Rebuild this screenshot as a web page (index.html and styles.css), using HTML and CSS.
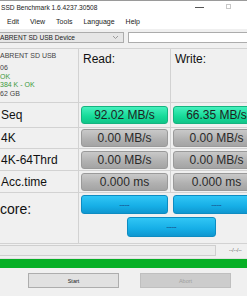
FILE: index.html
```html
<!DOCTYPE html>
<html lang="en">
<head>
    <meta charset="UTF-8">
    <title>AS SSD Benchmark</title>
    <link rel="stylesheet" href="styles.css">
</head>
<body>
    <div class="window">
        <div class="titlebar">
            <span class="title">SSD Benchmark 1.6.4237.30508</span>
            <span class="win_min"></span>
            <span class="win_max"></span>
        </div>

        <ul class="menu">
            <li>Edit</li>
            <li>View</li>
            <li>Tools</li>
            <li>Language</li>
            <li>Help</li>
        </ul>

        <div class="toolbar">
            <div class="combo">
                <span>ABRENT SD USB Device</span>
                <svg width="7" height="5" viewBox="0 0 7 5"><path d="M1 1 L3.5 3.5 L6 1" fill="none" stroke="#9a9a9a" stroke-width="1"/></svg>
            </div>
            <div class="path_box"></div>
        </div>

        <div class="bench">
            <div class="cell info">
                <p>ABRENT SD USB</p>
                <p>06</p>
                <p class="ok">OK</p>
                <p class="ok">384 K - OK</p>
                <p>62 GB</p>
            </div>
            <div class="cell head">Read:</div>
            <div class="cell head">Write:</div>

            <div class="cell label">Seq</div>
            <div class="cell"><div class="result green">92.02 MB/s</div></div>
            <div class="cell"><div class="result green">66.35 MB/s</div></div>

            <div class="cell label">4K</div>
            <div class="cell"><div class="result grey">0.00 MB/s</div></div>
            <div class="cell"><div class="result grey">0.00 MB/s</div></div>

            <div class="cell label">4K-64Thrd</div>
            <div class="cell"><div class="result grey">0.00 MB/s</div></div>
            <div class="cell"><div class="result grey">0.00 MB/s</div></div>

            <div class="cell label">Acc.time</div>
            <div class="cell"><div class="result grey">0.000 ms</div></div>
            <div class="cell"><div class="result grey">0.000 ms</div></div>

            <div class="cell label score_label">core:</div>
            <div class="cell score_cell">
                <div class="score_top">
                    <div class="result blue">------</div>
                    <div class="result blue">------</div>
                </div>
                <div class="result blue total">------</div>
            </div>
        </div>

        <div class="progress_row">
            <div class="progress_text"></div>
            <span class="time">--/--/--</span>
        </div>
        <div class="progress_bar"></div>

        <div class="buttons">
            <button type="button" class="btn">Start</button>
            <button type="button" class="btn" disabled>Abort</button>
        </div>
    </div>
</body>
</html>
```

FILE: styles.css
```css
/* General */
*{
    box-sizing: border-box;
}
html, body{
    margin: 0px;
    padding: 0px;
}
body{
    width: 247px;
    height: 296px;
    overflow: hidden;
    background-color: #f0f0f0;
    font-family: "Liberation Sans", Arial, sans-serif;
}
.window{
    display: flex;
    flex-direction: column;
    width: 247px;
    height: 296px;
    overflow: hidden;
}

/* Title + menu */
.titlebar{
    display: flex;
    align-items: center;
    height: 14px;
    background-color: white;
    border-top: 1px solid #9a9a9a;
    font-size: 6.6px;
    color: #222;
}
.title{
    flex: 1;
    padding-left: 1px;
}
.win_min{
    width: 9px;
    height: 1px;
    background-color: #555;
    margin-right: 22px;
}
.win_max{
    width: 5px;
    height: 5px;
    border: 1px solid #c8c8c8;
    margin-right: 16px;
    margin-bottom: 3px;
}
.menu{
    display: flex;
    align-items: center;
    gap: 11px;
    list-style: none;
    margin: 0px;
    padding: 0px 0px 0px 7px;
    height: 15px;
    background-color: white;
    font-size: 7px;
    color: #222;
}

/* Toolbar */
.toolbar{
    display: flex;
    align-items: center;
    gap: 4px;
    height: 19px;
    padding-bottom: 3px;
}
.combo{
    display: flex;
    align-items: center;
    justify-content: space-between;
    width: 124px;
    height: 11px;
    padding: 0px 4px 0px 0px;
    background-color: #e6e6e6;
    border: 1px solid #acacac;
    border-left: none;
    font-size: 6.6px;
    color: #222;
}
.path_box{
    flex: 1;
    height: 11px;
    background-color: white;
    border: 1px solid #acacac;
    border-right: none;
}

/* Bench grid */
.bench{
    display: grid;
    grid-template-columns: 78px 91px 77px;
    grid-template-rows: 53px 24px 20px 21px 21px 50px;
    gap: 1px;
    background-color: #d2d2d2;
    border-top: 1px solid #d2d2d2;
    border-bottom: 1px solid #d2d2d2;
}
.cell{
    display: flex;
    align-items: center;
    background-color: #f0f0f0;
    padding: 0px 0px 0px 2px;
    overflow: hidden;
}
.info{
    flex-direction: column;
    align-items: flex-start;
    justify-content: flex-start;
    padding: 3px 0px 0px 0px;
    font-size: 7px;
    color: #444;
}
.info p{
    margin: 0px;
    line-height: 8.4px;
    white-space: nowrap;
}
.info p:first-child{
    margin-bottom: 4px;
}
.ok{
    color: #3c9a3c;
}
.head{
    align-items: flex-start;
    padding: 3px 0px 0px 4px;
    font-size: 12px;
    color: #111;
}
.label{
    padding-left: 1px;
    font-size: 12px;
    color: #111;
}
.score_label{
    align-items: flex-start;
    padding: 8px 0px 0px 0px;
    font-size: 14px;
}
.result{
    display: flex;
    align-items: center;
    justify-content: center;
    flex-shrink: 0;
    width: 87px;
    height: 18px;
    border-radius: 3px;
    font-size: 12px;
    color: #1e1e1e;
}
.green{
    background: linear-gradient(#46f0bd, #16da98 60%, #10c588);
    border: 1px solid #14b47f;
}
.grey{
    background: linear-gradient(#c9c9c9, #b0b0b0 60%, #a4a4a4);
    border: 1px solid #9a9a9a;
    color: #2a2a2a;
}
.blue{
    background: linear-gradient(#31c6f5, #16aee6 60%, #0f97d0);
    border: 1px solid #0d8cc2;
    font-size: 5px;
    font-weight: bold;
    color: #17447a;
}

/* Score */
.score_cell{
    grid-column: 2 / 4;
    flex-direction: column;
    align-items: flex-start;
    padding: 2px 0px 0px 0px;
    gap: 3px;
}
.score_top{
    display: flex;
    gap: 5px;
    padding-left: 2px;
}
.score_top .result{
    height: 19px;
}
.total{
    width: 89px;
    height: 20px;
    margin-left: 48px;
}

/* Bottom */
.progress_row{
    display: flex;
    align-items: center;
    height: 12px;
}
.progress_text{
    width: 216px;
    height: 11px;
    border: 1px solid #cfcfcf;
    border-left: none;
    background-color: #ececec;
}
.time{
    margin-left: 13px;
    font-size: 5px;
    color: #555;
}
.progress_bar{
    height: 10px;
    margin-top: 2px;
    background-color: #06b025;
    border-top: 1px solid #e0e0e0;
}
.buttons{
    display: flex;
    gap: 21px;
    padding: 5px 0px 0px 28px;
}
.btn{
    width: 91px;
    height: 15px;
    padding: 0px;
    background-color: #e1e1e1;
    border: 1px solid #adadad;
    font-family: "Liberation Sans", Arial, sans-serif;
    font-size: 5.5px;
    color: #222;
}
.btn:disabled{
    background-color: #cccccc;
    border-color: #bfbfbf;
    color: #a0a0a0;
}
```
